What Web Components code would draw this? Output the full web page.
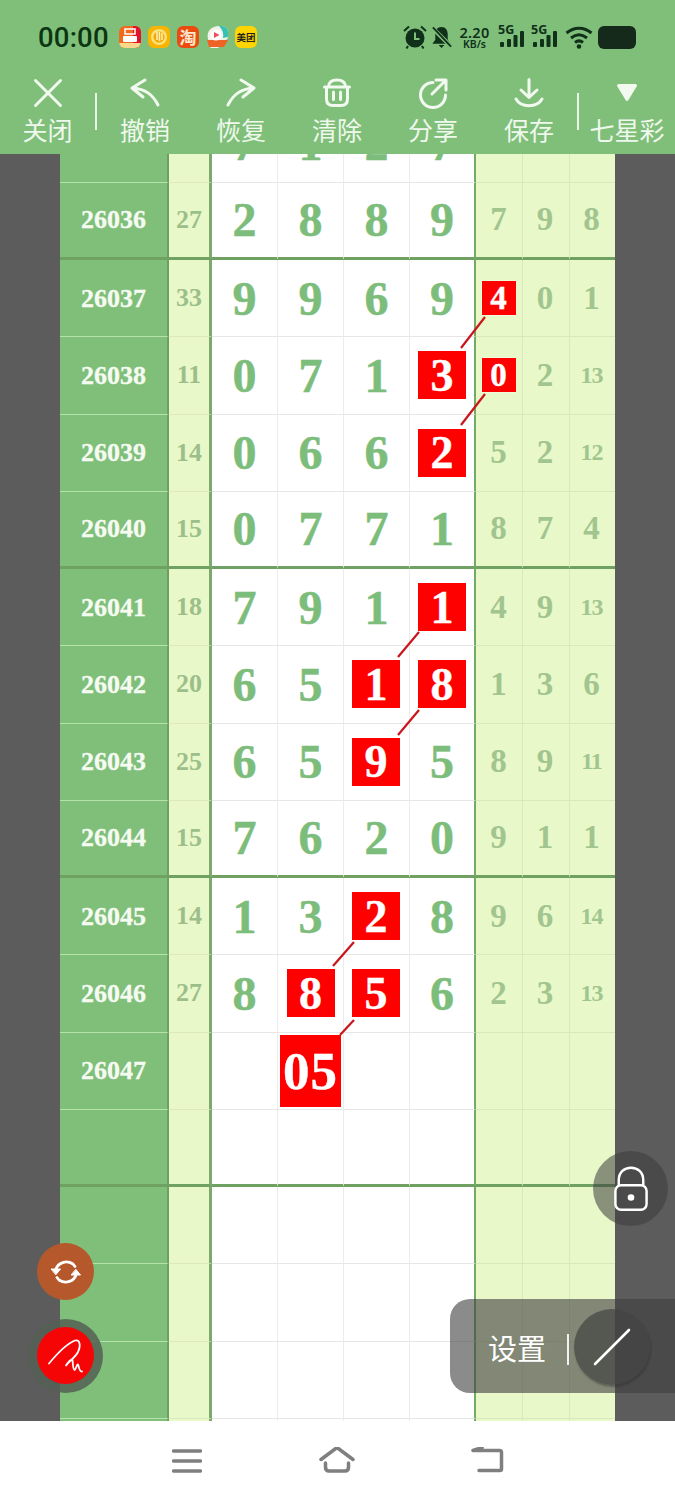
<!DOCTYPE html>
<html lang="zh">
<head>
<meta charset="utf-8">
<title>七星彩</title>
<style>
    html, body { margin: 0; padding: 0; background: #fff; }
    body { width: 675px; height: 1500px; overflow: hidden; font-family: "Noto Sans CJK SC", "Noto Sans", sans-serif; }
    #app { position: relative; width: 675px; height: 1500px; display: flex; flex-direction: column; overflow: hidden; }
</style>
</head>
<body>
<div id="app">
    <status-bar></status-bar>
    <tool-bar>
        <tool-item label="关闭" style="width:95px"><svg viewBox="0 0 32 32"><path d="M3.500 3.500L28.500 28.500M28.500 3.500L3.500 28.500"/></svg></tool-item>
        <tool-sep></tool-sep>
        <tool-item label="撤销"><svg viewBox="0 0 32 32"><path d="M29 28C24 18 17 12 3 11M16 3L3 11L14 20"/></svg></tool-item>
        <tool-item label="恢复"><svg viewBox="0 0 32 32"><path d="M3 28C8 18 15 12 29 11M16 3L29 11L18 20"/></svg></tool-item>
        <tool-item label="清除"><svg viewBox="0 0 32 32"><path d="M3.500 10H28.500M7.500 10C7.500 5 11 3 16 3S24.500 5 24.500 10M5.500 10V22C5.500 26.500 8 28.500 12 28.500H20C24 28.500 26.500 26.500 26.500 22V10M12.500 15V22.500M19.500 15V22.500"/></svg></tool-item>
        <tool-item label="分享"><svg viewBox="0 0 32 32"><path d="M16 5.500A12.500 12.500 0 1 0 28.500 18M15 17L29 3M19 3H29V13"/></svg></tool-item>
        <tool-item label="保存"><svg viewBox="0 0 32 32"><path d="M16 2.500V20M8 13L16 20.500L24 13M3 22C8 31 24 31 29 22"/></svg></tool-item>
        <tool-sep></tool-sep>
        <tool-item label="七星彩" style="flex:1"><svg viewBox="0 0 32 32"><path style="fill:#f2f9ef" d="M7.500 8.500H24.500L16 22.500Z"/></svg></tool-item>
    </tool-bar>
    <chart-sheet></chart-sheet>
    <nav-bar></nav-bar>
    <float-tools></float-tools>
</div>

<script>
class StatusBar extends HTMLElement {
    constructor() {
        super();
        this.attachShadow({ mode: 'open' });
    }

    connectedCallback() {
        this.shadowRoot.innerHTML = `
            <style>
                :host { display: flex; align-items: center; justify-content: space-between; height: 72px; background: #7fbf7a; padding: 2px 39px 0 38px; box-sizing: border-box; color: #10301a; font-family: "Noto Sans", Roboto, sans-serif; }
                .left, .right { display: flex; align-items: center; }
                .time { font: 500 27.500px Roboto, sans-serif; letter-spacing: .2px; color: #0c3512; width: 81px; }
                .apps { display: flex; gap: 7px; }
                .app { width: 22px; height: 22px; border-radius: 6px; display: flex; align-items: center; justify-content: center; overflow: hidden; font-family: "Noto Sans CJK SC", sans-serif; }
                .tao { background: #ea4c10; color: #ffe9d0; font-size: 17px; font-weight: 700; line-height: 22px; }
                .mt { background: #ffd400; color: #222; font-size: 9.500px; font-weight: 700; line-height: 22px; white-space: nowrap; }
                .app svg { width: 22px; height: 22px; display: block; }
                .speed { width: 31px; margin: 0 8px 0 7px; text-align: center; font-weight: 600; line-height: 1; }
                .speed b { display: block; font-size: 14.500px; font-weight: 600; letter-spacing: .3px; }
                .speed span { display: block; font-size: 10.500px; margin-top: 0; }
                .sig { position: relative; width: 27px; height: 24px; margin-right: 6px; }
                .sig span { position: absolute; left: 0; top: -3px; font: 700 12.500px/16px "Noto Sans", sans-serif; }
                .sig svg { position: absolute; left: 0; top: 0; width: 27px; height: 24px; }
                svg { display: block; fill: #10301a; }
            </style>
            <div class="left">
                <span class="time">00:00</span>
                <div class="apps">
                    <div class="app"><svg viewBox="0 0 22 22"><rect width="22" height="22" fill="#ef6a1c"/><rect x="14" width="8" height="22" fill="#e3122c"/><rect y="17" width="22" height="5" fill="#fbd98c"/><rect x="6" y="3" width="10" height="5" fill="none" stroke="#fff" stroke-width="1.500"/><rect x="4" y="10" width="14" height="6" rx="1" fill="#fff"/></svg></div>
                    <div class="app"><svg viewBox="0 0 22 22"><rect width="22" height="22" fill="#f8b400"/><circle cx="11" cy="11" r="8" fill="#fbe27a"/><circle cx="11" cy="11" r="5.500" fill="#f6a800"/><path d="M9 6V14M11.500 6V15M14 7V14" stroke="#fff3bf" stroke-width="1.500"/></svg></div>
                    <div class="app tao">淘</div>
                    <div class="app"><svg viewBox="0 0 22 22"><rect width="22" height="22" fill="#7fbf7a"/><path d="M2 13C0 5 6 0 13 0H22V12L12 22H4Z" fill="#f3f1e8"/><path d="M13 0H22V11L17 12C18 7 16 3 13 0Z" fill="#35c2b4"/><path d="M1 14L3 21H18L22 14Z" fill="#ef6426"/><circle cx="10" cy="9" r="5.500" fill="#fff"/><path d="M8 6L13.500 9L8 12Z" fill="#ee4f5f"/></svg></div>
                    <div class="app mt">美团</div>
                </div>
            </div>
            <div class="right">
                <svg width="24" height="24" viewBox="0 0 24 24" style="margin-right:4px"><circle cx="12" cy="13" r="9.500"/><path d="M1 6L6 1.500M23 6L18 1.500M5 21L3.500 23.500M19 21L20.500 23.500" stroke="#10301a" stroke-width="2" fill="none"/><path d="M12 7.500V14H16.500" stroke="#7fbf7a" stroke-width="2" fill="none"/></svg>
                <svg width="21" height="24" viewBox="0 0 22 24"><path d="M11 1.500C15.500 1.500 17.500 5 17.500 9V15L20.500 19H1.500L4.500 15V9C4.500 5 6.500 1.500 11 1.500Z"/><path d="M8 20.500H14L11 23.500Z"/><path d="M1 2L21 22" stroke="#7fbf7a" stroke-width="4.500"/><path d="M2 2L21 22" stroke="#10301a" stroke-width="2"/></svg>
                <div class="speed"><b>2.20</b><span>KB/s</span></div>
                <div class="sig"><span>5G</span><svg viewBox="0 0 27 24"><rect x="2" y="17" width="4" height="5" rx="1"/><rect x="9" y="14" width="4" height="8" rx="1"/><rect x="15.500" y="10" width="4" height="12" rx="1"/><rect x="22" y="6" width="4" height="16" rx="1"/></svg></div>
                <div class="sig" style="margin-right:7px"><span>5G</span><svg viewBox="0 0 27 24"><rect x="2" y="17" width="4" height="5" rx="1"/><rect x="9" y="14" width="4" height="8" rx="1"/><rect x="15.500" y="10" width="4" height="12" rx="1"/><rect x="22" y="6" width="4" height="16" rx="1"/></svg></div>
                <svg width="28" height="24" viewBox="0 0 28 24" style="margin-right:5px;fill:none;stroke:#10301a;stroke-width:3"><path d="M1.500 8C9 1.500 19 1.500 26.500 8M6 13C11 9 17 9 22 13M10 17.500C12.500 15.500 15.500 15.500 18 17.500"/><circle cx="14" cy="21.500" r="2.300" fill="#10301a" stroke="none"/></svg>
                <svg width="38" height="23" viewBox="0 0 38 23"><rect width="38" height="23" rx="6" fill="#152a1a"/></svg>
            </div>`;
    }
}
customElements.define('status-bar', StatusBar);

class ToolBar extends HTMLElement {
    constructor() {
        super();
        this.attachShadow({ mode: 'open' });
    }

    connectedCallback() {
        this.shadowRoot.innerHTML = `
            <style>
                :host { display: flex; height: 82px; background: #7fbf7a; align-items: stretch; }
            </style>
            <slot></slot>`;
    }
}
customElements.define('tool-bar', ToolBar);

class ToolItem extends HTMLElement {
    constructor() {
        super();
        this.attachShadow({ mode: 'open' });
    }

    connectedCallback() {
        this.shadowRoot.innerHTML = `
            <style>
                :host { display: flex; flex-direction: column; align-items: center; width: 96px; flex: none; color: #eff8ec; font-family: "Noto Sans CJK SC", sans-serif; }
                ::slotted(svg) { width: 32px; height: 32px; margin-top: 5px; fill: none; stroke: #f2f9ef; stroke-width: 3; stroke-linecap: round; stroke-linejoin: round; }
                span { font-size: 25px; line-height: 36px; margin-top: 2px; white-space: nowrap; }
            </style>
            <slot></slot>
            <span>${this.getAttribute('label')}</span>`;
    }
}
customElements.define('tool-item', ToolItem);

class ToolSep extends HTMLElement {
    constructor() {
        super();
        this.attachShadow({ mode: 'open' });
    }

    connectedCallback() {
        this.shadowRoot.innerHTML = `
            <style>
                :host { display: block; width: 2px; height: 37px; margin-top: 21px; background: #eaf6e6; flex: none; }
            </style>`;
    }
}
customElements.define('tool-sep', ToolSep);

class ChartRow extends HTMLElement {
    constructor() {
        super();
        this.attachShadow({ mode: 'open' });
    }

    connectedCallback() {
        const issue = this.getAttribute('issue') || '';
        const sum = this.getAttribute('sum') || '';
        const cells = (this.getAttribute('cells') || '_ _ _ _ _ _ _').split(' ');
        const html = cells.map((c, i) => {
            const right = i > 3;
            const hit = c.startsWith('*');
            const val = c.replace('*', '').replace('_', '');
            const small = val.length > 1 ? ' small' : '';
            const inner = hit ? `<b class="box ${val.length > 1 ? 'big' : ''}">${val}</b>` : val;
            return `<div class="cell c${i} ${right ? 'right' : 'main'}${small}">${inner}</div>`;
        }).join('');
        this.shadowRoot.innerHTML = `
            <style>
                :host { display: block; height: 77.250px; }
                .row { display: grid; height: 100%; box-sizing: border-box; grid-template-columns: 109px 43px 66px 66px 66px 66px 47px 47px 45px; font-family: "Liberation Serif", serif; font-weight: 700; }
                .cell, .issue, .sum { display: flex; align-items: center; justify-content: center; box-sizing: border-box; border-bottom: 1px solid #e6e6e6; overflow: visible; }
                .issue { background: #7fbf7a; color: #f6fbf2; font-size: 26px; padding-top: 1px; -webkit-text-stroke: .3px #f6fbf2; border-right: 2px solid #6e9e66; border-bottom-color: #b4e2a8; }
                .sum { background: #e9f8c9; color: #9cbf8a; font-size: 26px; border-right: 3px solid #7da86f; border-bottom-color: #dbe9bd; }
                .main { background: #fff; color: #7dbd7b; font-size: 48px; -webkit-text-stroke: .5px #7dbd7b; border-right: 1px solid #ececec; }
                .right { background: #e8f8c8; color: #a2c590; font-size: 33px; padding-right: 2px; border-right: 1px solid #d9e9bc; border-bottom-color: #d9e9bc; }
                .c2 .box { margin-left: -1px; }
                .c3 { border-right: 2.500px solid #72ab66; }
                .c4 { padding-right: 1px; }
                .c6 { border-right: 0; }
                .small { font-size: 24px; letter-spacing: -1px; }
                .box { display: flex; align-items: center; justify-content: center; background: #f00; color: #fff; width: 48px; height: 48px; font-size: 46px; -webkit-text-stroke: .4px #fff; box-shadow: 0 0 2px #fff; letter-spacing: 0; }
                .right .box { width: 34px; height: 34px; font-size: 33px; }
                .box.big { width: 61px; height: 72px; font-size: 53px; letter-spacing: 1px; }
                :host([thick]) .cell, :host([thick]) .issue, :host([thick]) .sum { border-bottom: 3px solid #6fa163; }
            </style>
            <div class="row">
                <div class="issue">${issue}</div>
                <div class="sum">${sum}</div>
                ${html}
            </div>`;
    }
}
customElements.define('chart-row', ChartRow);

class ChartSheet extends HTMLElement {
    constructor() {
        super();
        this.attachShadow({ mode: 'open' });
    }

    connectedCallback() {
        const rows = [
            ['', '', '7 1 2 7 2 4 3'],
            ['26036', '27', '2 8 8 9 7 9 8', 1],
            ['26037', '33', '9 9 6 9 *4 0 1'],
            ['26038', '11', '0 7 1 *3 *0 2 13'],
            ['26039', '14', '0 6 6 *2 5 2 12'],
            ['26040', '15', '0 7 7 1 8 7 4', 1],
            ['26041', '18', '7 9 1 *1 4 9 13'],
            ['26042', '20', '6 5 *1 *8 1 3 6'],
            ['26043', '25', '6 5 *9 5 8 9 11'],
            ['26044', '15', '7 6 2 0 9 1 1', 1],
            ['26045', '14', '1 3 *2 8 9 6 14'],
            ['26046', '27', '8 *8 *5 6 2 3 13'],
            ['26047', '', '_ *05 _ _ _ _ _'],
            ['', '', '_ _ _ _ _ _ _', 1],
            ['', '', '_ _ _ _ _ _ _'],
            ['', '', '_ _ _ _ _ _ _'],
            ['', '', '_ _ _ _ _ _ _'],
            ['', '', '_ _ _ _ _ _ _']
        ];
        const links = [
            [485, 317, 461, 348], [485, 394, 461, 425],
            [419, 632, 398, 657], [419, 710, 398, 735],
            [354, 942, 333, 966], [354, 1020, 340, 1035]
        ];
        this.shadowRoot.innerHTML = `
            <style>
                :host { display: block; position: relative; height: 1267px; background: #5c5c5c; overflow: hidden; padding: 0 60px; box-sizing: border-box; }
                .rows { margin-top: -48.500px; }
                svg { position: absolute; left: 0; top: 0; width: 675px; height: 1267px; pointer-events: none; }
            </style>
            <div class="rows">
                ${rows.map(r => `<chart-row issue="${r[0]}" sum="${r[1]}" cells="${r[2]}" ${r[3] ? 'thick' : ''}></chart-row>`).join('')}
            </div>
            <svg viewBox="0 154 675 1267">
                ${links.map(l => `<line x1="${l[0]}" y1="${l[1]}" x2="${l[2]}" y2="${l[3]}" stroke="#c8161c" stroke-width="2.200"/>`).join('')}
            </svg>`;
    }
}
customElements.define('chart-sheet', ChartSheet);

class NavBar extends HTMLElement {
    constructor() {
        super();
        this.attachShadow({ mode: 'open' });
    }

    connectedCallback() {
        this.shadowRoot.innerHTML = `
            <style>
                :host { display: flex; height: 79px; background: #fff; align-items: center; justify-content: center; gap: 0; }
                svg { display: block; fill: none; stroke: #7f7f7f; stroke-width: 3.500; stroke-linecap: round; stroke-linejoin: round; }
            </style>
            <svg width="30" height="26" viewBox="0 0 30 26" style="margin-right:117px"><path d="M1.500 3H28.500M1.500 13H28.500M1.500 23H28.500"/></svg>
            <svg width="36" height="28" viewBox="0 0 36 28" style="margin-right:116px"><path d="M2 12.500L18 .500L34 12.500M6.500 16V20C6.500 23 8 24 10 24H26C28 24 29.500 23 29.500 20V16"/></svg>
            <svg width="33" height="28" viewBox="0 0 33 28" style="margin-right:-1px"><path d="M11 .500L2 3.500H28.500C30 3.500 30.500 4 30.500 5.500V22C30.500 23 30 23.500 29 23.500H8"/></svg>`;
    }
}
customElements.define('nav-bar', NavBar);

class FloatTools extends HTMLElement {
    constructor() {
        super();
        this.attachShadow({ mode: 'open' });
    }

    connectedCallback() {
        this.shadowRoot.innerHTML = `
            <style>
                :host { display: block; position: absolute; left: 0; top: 0; width: 675px; height: 1500px; pointer-events: none; font-family: "Noto Sans CJK SC", sans-serif; }
                .round { position: absolute; border-radius: 50%; display: flex; align-items: center; justify-content: center; }
                .sync { left: 37px; top: 1243px; width: 57px; height: 57px; background: #b5592c; }
                .ring { left: 28px; top: 1319px; width: 75px; height: 74px; background: rgba(85, 95, 85, .85); }
                .pen { left: 37px; top: 1327px; width: 57px; height: 57px; background: #f50505; }
                .lock { left: 593px; top: 1151px; width: 75px; height: 75px; background: rgba(60, 60, 60, .55); }
                .pill { position: absolute; left: 450px; top: 1299px; width: 225px; height: 94px; border-radius: 20px 0 0 20px; background: rgba(62, 62, 62, .6); color: #fff; }
                .pill span { position: absolute; left: 38px; top: 28px; font-size: 29px; line-height: 40px; }
                .pill i { position: absolute; left: 117px; top: 35px; width: 2px; height: 31px; background: #f2f2f2; }
                .slash { left: 574px; top: 1309px; width: 76px; height: 76px; background: rgba(68, 68, 68, .72); box-shadow: 1px 2px 2px rgba(40, 40, 40, .4); }
                svg { display: block; fill: none; stroke: #fff; stroke-linecap: round; stroke-linejoin: round; }
            </style>
            <div class="round sync"><svg width="32" height="32" viewBox="0 0 32 32" stroke-width="2.800"><path d="M6 13C8 7 16 3.500 23 8L25 10.500M26 19C24 25 16 28.500 9 24L7 21.500"/><path d="M1.500 13H10.500L6 18.500Z" fill="#fff" stroke-width="1"/><path d="M21.500 19H30.500L26 13.500Z" fill="#fff" stroke-width="1"/></svg></div>
            <div class="round ring"></div>
            <div class="round pen"><svg width="36" height="36" viewBox="0 0 36 36" stroke="#ffd9d9" stroke-width="1.800"><path d="M1 25.500C8 17 18 6 27 2.500C32 1 33 8 30 14C27 20 20 24 18 27.500C20 24 24 20 24.500 22C25 26 25 32 26.500 32C28 31 29 26 30 26.500C31 28 31 34 34 33.500"/></svg></div>
            <div class="round lock"><svg width="34" height="48" viewBox="0 0 36 48" stroke-width="2.600"><path d="M5 20V15C5 6 11 1.500 18 1.500S31 6 31 15V20"/><rect x="1.500" y="20" width="33" height="26" rx="6"/><circle cx="18" cy="33" r="3.500" fill="#fff" stroke="none"/></svg></div>
            <div class="pill"><span>设置</span><i></i></div>
            <div class="round slash"><svg width="38" height="38" viewBox="0 0 38 38" stroke-width="2.600"><path d="M2 36L36 2"/></svg></div>`;
    }
}
customElements.define('float-tools', FloatTools);
</script>
</body>
</html>
